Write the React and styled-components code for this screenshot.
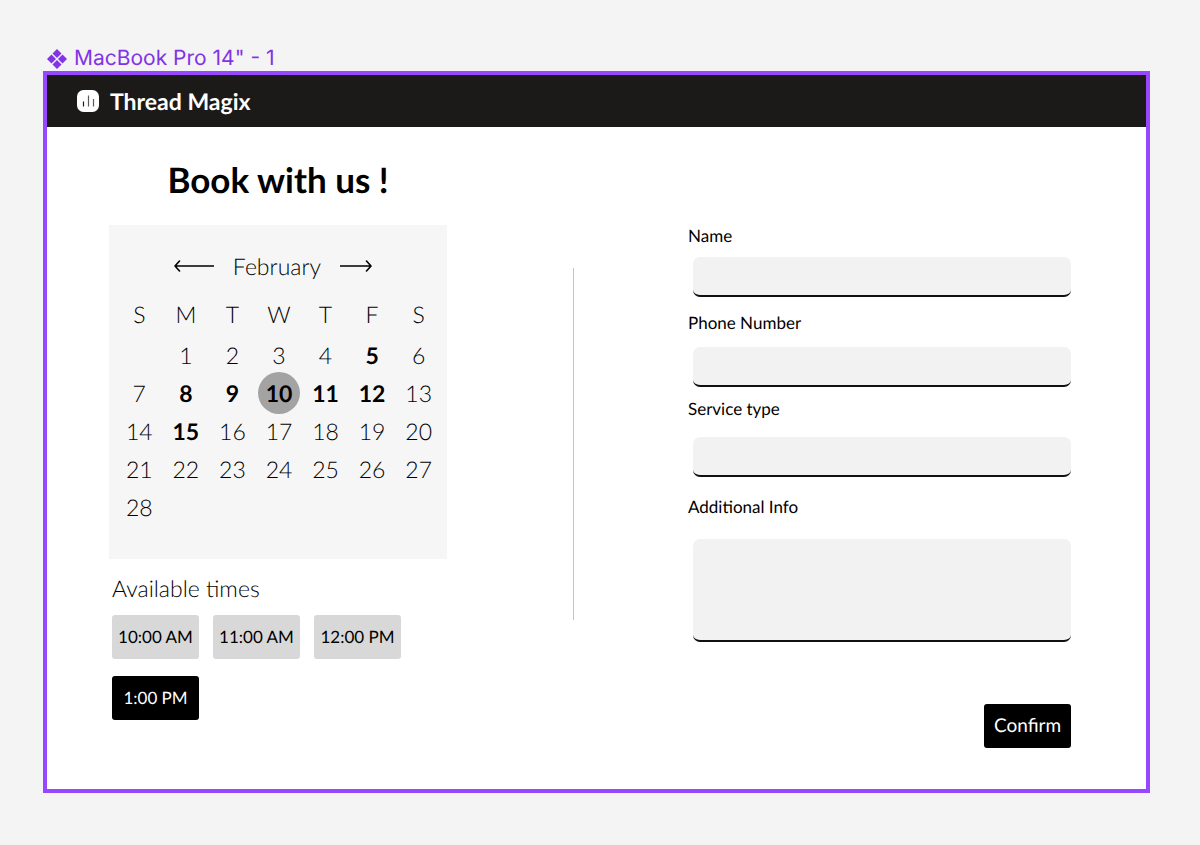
import { useState } from 'react';
import styled, { createGlobalStyle } from 'styled-components';

const weekDays = ['S', 'M', 'T', 'W', 'T', 'F', 'S'];
const openDays = [5, 8, 9, 10, 11, 12, 15];
const times = ['10:00 AM', '11:00 AM', '12:00 PM', '1:00 PM'];

// February starts on a monday
const weeks = [0, 1, 2, 3, 4].map(week =>
    weekDays.map((_, i) => {
        const day = week * 7 + i;
        return day >= 1 && day <= 28 ? day : null;
    })
);

export default function App() {
    const [day, setDay] = useState(10);
    const [time, setTime] = useState('1:00 PM');

    return (
    <>
        <GlobalStyle />
        <Page>
            <FrameName>
                <ComponentIcon />
                <span>MacBook Pro 14" - 1</span>
            </FrameName>

            <Frame>
                <Header>
                    <LogoIcon />
                    <h2>Thread Magix</h2>
                </Header>

                <Content>
                    <Booking>
                        <Title>Book with us !</Title>
                        <Calendar>
                            <MonthRow>
                                <ArrowButton type="button" aria-label="Previous month">
                                    <svg width="40" height="14" viewBox="0 0 40 14">
                                        <path d="M39.5 7H1M5.5 2L1 7L5.5 12" />
                                    </svg>
                                </ArrowButton>
                                <p>February</p>
                                <ArrowButton type="button" aria-label="Next month">
                                    <svg width="32" height="14" viewBox="0 0 32 14">
                                        <path d="M0.5 7H31M26.5 2L31 7L26.5 12" />
                                    </svg>
                                </ArrowButton>
                            </MonthRow>
                            <Days>
                                <thead>
                                    <tr>{weekDays.map((elem, i) => <th key={i} scope="col">{elem}</th>)}</tr>
                                </thead>
                                <tbody>
                                    {weeks.map((week, i) =>
                                        <tr key={i}>
                                            {week.map((elem, j) =>
                                                <td key={j}>
                                                    {elem && <Day
                                                        type="button"
                                                        $open={openDays.includes(elem)}
                                                        $selected={elem === day}
                                                        onClick={() => setDay(elem)}
                                                    >{elem}</Day>}
                                                </td>)}
                                        </tr>)}
                                </tbody>
                            </Days>
                        </Calendar>

                        <Times>
                            <h3>Available times</h3>
                            <TimeList>
                                {times.map(elem =>
                                    <Button
                                        key={elem}
                                        type="button"
                                        $light={elem !== time}
                                        onClick={() => setTime(elem)}
                                    >{elem}</Button>)}
                            </TimeList>
                        </Times>
                    </Booking>

                    <Divider />

                    <Form onSubmit={e => e.preventDefault()}>
                        <Field $gap={9} $after={14}>
                            <label htmlFor="name">Name</label>
                            <Input id="name" type="text" />
                        </Field>
                        <Field $gap={12} $after={10}>
                            <label htmlFor="phone">Phone Number</label>
                            <Input id="phone" type="tel" />
                        </Field>
                        <Field $gap={16} $after={18}>
                            <label htmlFor="service">Service type</label>
                            <Input id="service" type="text" />
                        </Field>
                        <Field $gap={20} $after={62}>
                            <label htmlFor="info">Additional Info</label>
                            <TextArea id="info" />
                        </Field>
                        <Button type="submit" $large>Confirm</Button>
                    </Form>
                </Content>
            </Frame>
        </Page>
    </>
    );
}

function ComponentIcon() {
    return (
        <svg width="20" height="20" viewBox="0 0 20 20" fill="#8133e6">
            <path d="M10 0L14.5 4.5L10 9L5.5 4.5Z" />
            <path d="M4.5 5.5L9 10L4.5 14.5L0 10Z" />
            <path d="M15.5 5.5L20 10L15.5 14.5L11 10Z" />
            <path d="M10 11L14.5 15.5L10 20L5.5 15.5Z" />
        </svg>
    );
}

function LogoIcon() {
    return (
        <svg width="22" height="22" viewBox="0 0 22 22">
            <rect width="22" height="22" rx="6.5" fill="#fff" />
            <path d="M6.5 11.5V16.5" stroke="#1c1a19" strokeWidth="1.2" />
            <path d="M11.5 5.5V16.5" stroke="#5c5b5a" strokeWidth="1.2" />
            <path d="M16.5 9V16.5" stroke="#5c5b5a" strokeWidth="1.2" />
        </svg>
    );
}

const GlobalStyle = createGlobalStyle`
    * {
        box-sizing: border-box;
        margin: 0;
        padding: 0;
    }

    body {
        background-color: #f4f4f4;
        color: #000;
        font-family: Lato, 'Liberation Sans', sans-serif;
        text-rendering: geometricPrecision;
    }

    button, input, textarea {
        font-family: inherit;
        color: inherit;
        border: none;
        text-rendering: inherit;
    }

    button {
        cursor: pointer;
    }
`;

const Page = styled.div`
    min-height: 100vh;
    padding: 47px 50px 52px 43px;
`;

const FrameName = styled.div`
    display: flex;
    align-items: center;
    gap: 7px;
    padding-left: 4px;
    font-family: Inter, sans-serif;
    font-size: 21px;
    line-height: 24px;
    color: #8133e6;
`;

const Frame = styled.main`
    border: 4px solid #9747ff;
    background-color: #fff;
`;

const Header = styled.header`
    height: 52px;
    display: flex;
    align-items: center;
    gap: 11px;
    padding: 0 30px;
    background-color: #1c1a19;

    h2 {
        font-size: 23px;
        font-weight: 700;
        line-height: 28px;
        color: #fff;
    }
`;

const Content = styled.div`
    display: grid;
    grid-template-columns: 464fr 1px 497fr;
    padding: 32px 75px 41px 62px;
`;

const Booking = styled.section`
    width: 100%;
    max-width: 338px;
`;

const Title = styled.h1`
    font-size: 35px;
    font-weight: 700;
    line-height: 42px;
    text-align: center;
    margin-bottom: 24px;
`;

const Calendar = styled.div`
    padding: 26px 5px 33px 7px;
    background-color: #f6f6f6;
`;

const MonthRow = styled.div`
    display: flex;
    justify-content: center;
    align-items: center;
    gap: 19px;
    padding-right: 12px;
    margin-bottom: 15px;

    p {
        font-size: 23px;
        font-weight: 300;
        line-height: 30px;
    }
`;

const ArrowButton = styled.button`
    display: flex;
    background: none;

    path {
        fill: none;
        stroke: #000;
        stroke-width: 1.6;
        stroke-linecap: round;
        stroke-linejoin: round;
    }
`;

const Days = styled.table`
    width: 100%;
    table-layout: fixed;
    border-collapse: collapse;
    text-align: center;

    th {
        height: 40px;
        padding-bottom: 4px;
        font-size: 23px;
        font-weight: 300;
    }

    td {
        height: 38px;
    }
`;

const Day = styled.button`
    width: 42px;
    height: 42px;
    margin: -2px;
    border-radius: 50%;
    background-color: ${props => props.$selected ? '#a3a3a3' : 'transparent'};
    font-size: 23px;
    font-weight: ${props => props.$open ? 700 : 300};
    line-height: 30px;
    vertical-align: middle;
`;

const Times = styled.div`
    padding: 14px 0 0 3px;

    h3 {
        font-size: 23px;
        font-weight: 300;
        line-height: 30px;
        margin-bottom: 12px;
    }
`;

const TimeList = styled.div`
    display: flex;
    flex-wrap: wrap;
    gap: 17px 14px;
`;

const Button = styled.button`
    width: 87px;
    height: 44px;
    border-radius: 3px;
    background-color: ${props => props.$light ? '#d8d8d8' : '#000'};
    color: ${props => props.$light ? '#000' : '#fff'};
    font-size: ${props => props.$large ? '19px' : '17px'};
    line-height: 24px;
    white-space: nowrap;
`;

const Divider = styled.div`
    margin: 109px 0 128px;
    background-color: #c4c4c4;
`;

const Form = styled.form`
    display: flex;
    flex-direction: column;
    padding: 65px 0 0 114px;

    > ${Button} {
        align-self: flex-end;
    }
`;

const Field = styled.div`
    display: flex;
    flex-direction: column;
    gap: ${props => props.$gap}px;
    margin-bottom: ${props => props.$after}px;

    label {
        font-size: 17px;
        line-height: 24px;
    }
`;

const Input = styled.input`
    height: 40px;
    margin-left: 5px;
    padding: 0 12px;
    border-radius: 7px;
    border-bottom: 2px solid #111;
    background-color: #f2f2f2;
    font-size: 17px;
`;

const TextArea = styled(Input).attrs({ as: 'textarea' })`
    height: 103px;
    padding: 8px 12px;
    resize: none;
`;
